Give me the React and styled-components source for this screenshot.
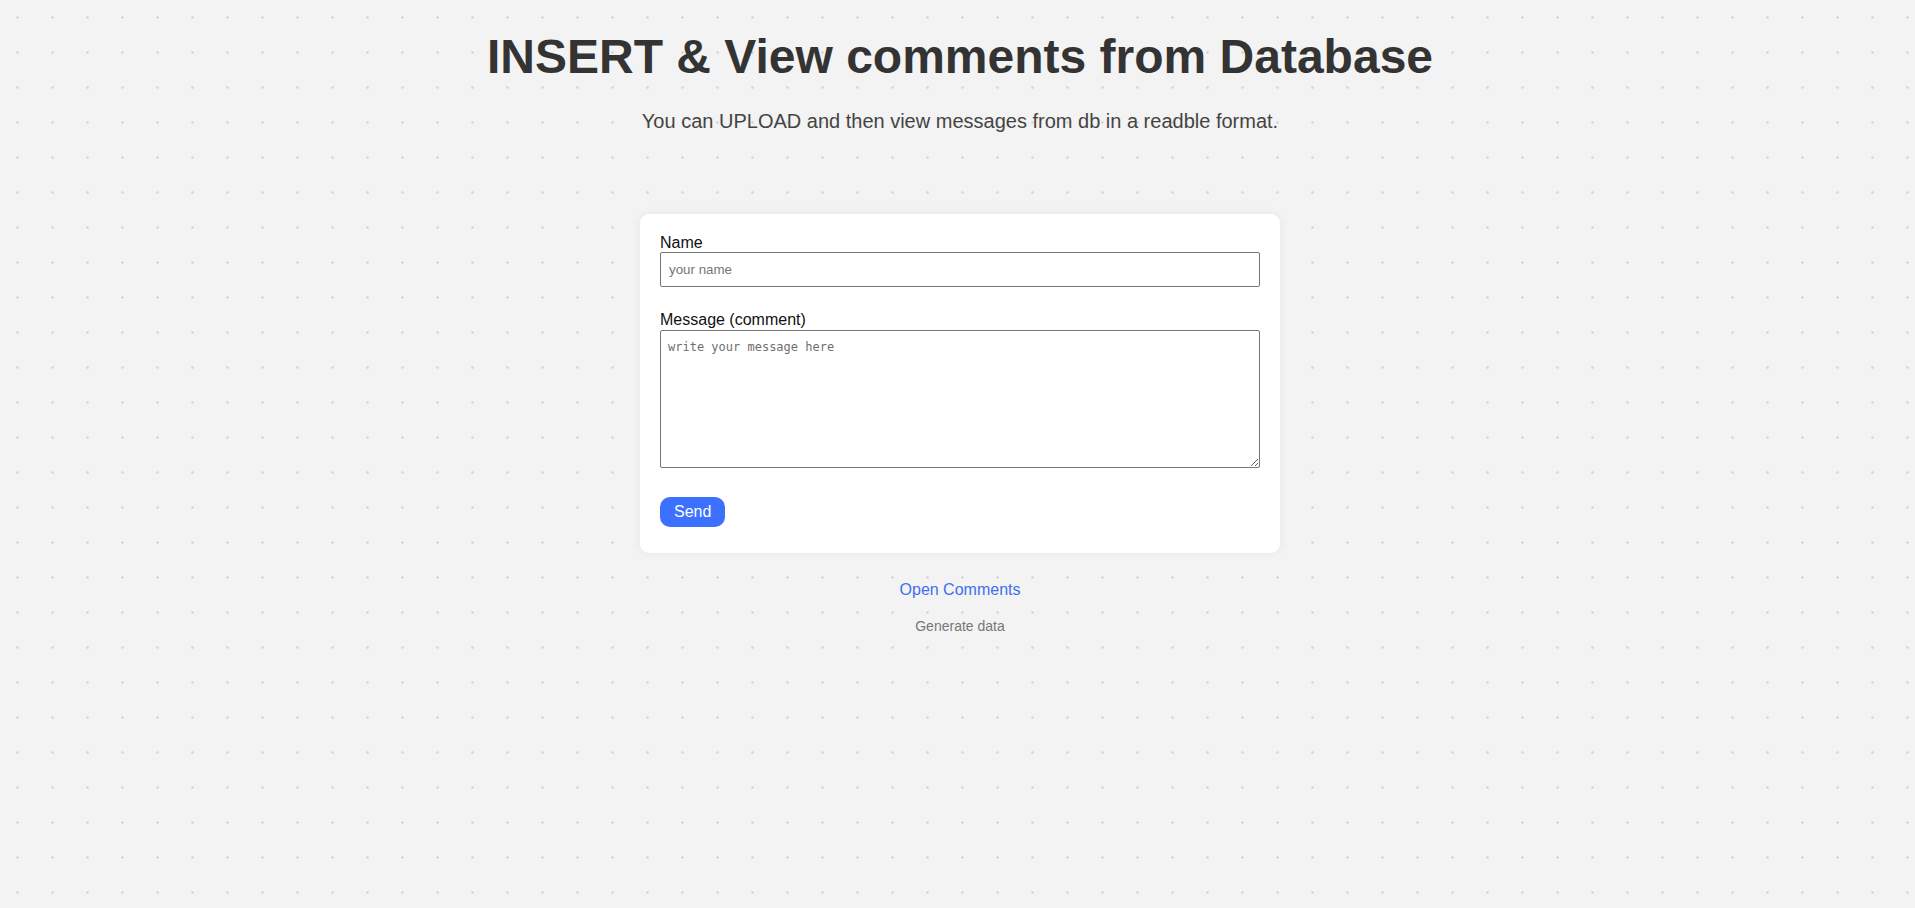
import React from "react";
import styled, { createGlobalStyle } from "styled-components";

const GlobalStyle = createGlobalStyle`
  html, body {
    margin: 0;
    padding: 0;
  }
  body {
    background-color: #f3f3f3;
    background-image: radial-gradient(circle at 17.5px 17.5px, #d8d8d8 1.1px, transparent 1.5px);
    background-size: 35px 35px;
    font-family: "Liberation Sans", Arial, sans-serif;
    color: #333;
  }
`;

const Page = styled.div`
  display: flex;
  flex-direction: column;
  align-items: center;
  padding: 26px 0 0 5px;
  min-height: 100vh;
  box-sizing: border-box;
`;

const Title = styled.h1`
  margin: 0;
  font-size: 48px;
  line-height: 62px;
  font-weight: 700;
  color: #333;
`;

const Subtitle = styled.p`
  margin: 21px 0 0;
  font-size: 20px;
  line-height: 24px;
  color: #444;
`;

const Card = styled.form`
  margin-top: 81px;
  width: 640px;
  box-sizing: border-box;
  padding: 20px 20px 26px;
  background: #fff;
  border-radius: 9px;
  box-shadow: 0 0 10px rgba(0, 0, 0, 0.06);
  display: flex;
  flex-direction: column;
`;

const Label = styled.label`
  display: block;
  font-size: 16px;
  line-height: 18px;
  color: #111;
`;

const Field = styled.div`
  margin-bottom: ${(p) => p.$gap || 0}px;
`;

const Input = styled.input`
  display: block;
  width: 100%;
  height: 35px;
  box-sizing: border-box;
  border: 1px solid #767676;
  border-radius: 2px;
  padding: 0 8px;
  font-family: "Liberation Sans", Arial, sans-serif;
  font-size: 13.33px;
  &::placeholder {
    color: #757575;
  }
`;

const TextArea = styled.textarea`
  display: block;
  width: 100%;
  height: 138px;
  box-sizing: border-box;
  border: 1px solid #767676;
  border-radius: 2px;
  padding: 8px 7px 6px;
  margin-top: 1px;
  font-family: "DejaVu Sans Mono", "Liberation Mono", monospace;
  font-size: 12px;
  line-height: 16px;
  resize: vertical;
  &::placeholder {
    color: #6f6f6f;
  }
`;

const SendButton = styled.button`
  align-self: flex-start;
  height: 30px;
  padding: 0 14px;
  border: none;
  border-radius: 10px;
  background: #3b71fe;
  color: #fff;
  font-family: "Liberation Sans", Arial, sans-serif;
  font-size: 16px;
  cursor: pointer;
`;

const LinkOpen = styled.a`
  margin-top: 28px;
  font-size: 16px;
  line-height: 18px;
  color: #3f6ff0;
  text-decoration: none;
`;

const LinkSmall = styled.a`
  margin-top: 19px;
  font-size: 14px;
  line-height: 16px;
  color: #777;
  text-decoration: none;
`;

export default function App() {
  return (
    <>
      <GlobalStyle />
      <Page>
        <Title>INSERT &amp; View comments from Database</Title>
        <Subtitle>You can UPLOAD and then view messages from db in a readble format.</Subtitle>
        <Card onSubmit={(e) => e.preventDefault()}>
          <Field $gap={24}>
            <Label htmlFor="name">Name</Label>
            <Input id="name" type="text" placeholder="your name" />
          </Field>
          <Field $gap={29}>
            <Label htmlFor="msg">Message (comment)</Label>
            <TextArea id="msg" placeholder="write your message here" />
          </Field>
          <SendButton type="submit">Send</SendButton>
        </Card>
        <LinkOpen href="#">Open Comments</LinkOpen>
        <LinkSmall href="#">Generate data</LinkSmall>
      </Page>
    </>
  );
}
